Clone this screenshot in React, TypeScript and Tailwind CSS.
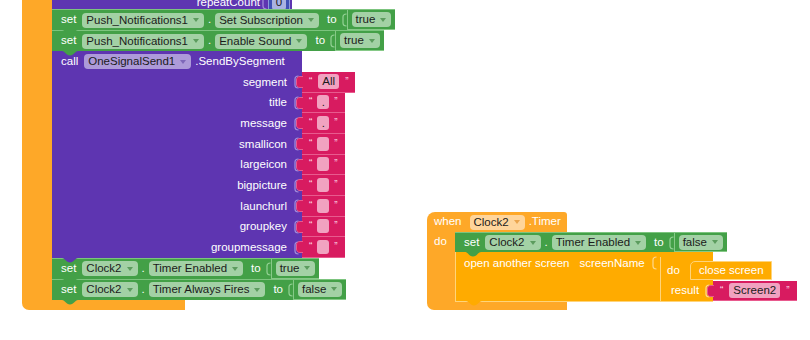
import React from "react";

type Tone = "green" | "purple" | "orange";

const FIELD_BG: Record<Tone, string> = {
  green: "bg-[#a3d1a5]",
  purple: "bg-[#ad9ad9]",
  orange: "bg-[#ffd59b]",
};

const CARET: Record<Tone, string> = {
  green: "fill-[#5c9c5e]",
  purple: "fill-[#7e68b9]",
  orange: "fill-[#eba54d]",
};

const Caret = ({ fill }: { fill: string }) => (
  <svg width="6" height="4" viewBox="0 0 6 4" className="ml-[5px] shrink-0">
    <path d="M0 0 L6 0 L3 4 Z" className={fill} />
  </svg>
);

const Field = ({ label, tone, className = "" }: { label: string; tone: Tone; className?: string }) => (
  <span
    className={`inline-flex h-[15px] shrink-0 items-center whitespace-nowrap rounded-[4px] pl-[4px] pr-[5px] leading-[15px] text-[#1b1b1b] ${FIELD_BG[tone]} ${className}`}
  >
    {label}
    <Caret fill={CARET[tone]} />
  </span>
);

// the "(" outline of an empty value socket
const Socket = ({ stroke, className = "" }: { stroke: string; className?: string }) => (
  <svg width="5" height="14" viewBox="0 0 5 14" className={`shrink-0 ${className}`}>
    <path d="M4.5 1 C2 1 1 2.5 1 4 L1 10 C1 11.5 2 13 4.5 13" fill="none" strokeWidth="1.2" className={stroke} />
  </svg>
);

// notch that hangs below a statement block
const Tab = ({ fill }: { fill: string }) => (
  <svg width="16" height="5" viewBox="0 0 16 5" className="absolute left-[10px] top-full z-10">
    <path d="M0 0 C3 0 4 4.5 8 4.5 C12 4.5 13 0 16 0 Z" className={fill} />
  </svg>
);

// puzzle knob on the left of a value block
const Knob = ({ fill, stroke }: { fill: string; stroke: string }) => (
  <svg width="7" height="12" viewBox="0 0 7 12" className="absolute -left-[6px] top-[4px]">
    <path d="M7 0.5 L4 0.5 C1.5 0.5 0.5 2 0.5 4 L0.5 8 C0.5 10 1.5 11.5 4 11.5 L7 11.5" strokeWidth="1" className={`${fill} ${stroke}`} />
  </svg>
);

const StringBlock = ({ text, className = "h-full" }: { text: string; className?: string }) => (
  <div className={`relative flex shrink-0 items-center border-b border-[#e85a8e] bg-[#d81b60] pl-[7px] pr-[7px] ${className}`}>
    <Knob fill="fill-[#d81b60]" stroke="stroke-[#e85a8e]" />
    <span className="text-[10px] leading-none text-[#fcd8e6]">“</span>
    {text.length <= 1 ? (
      <span className="mx-[5px] flex h-[14px] w-[12px] items-center justify-center rounded-[3px] bg-[#f1a2c0] leading-[14px] text-[#1b1b1b]">
        {text}
      </span>
    ) : (
      <span className="mx-[6px] flex h-[15px] items-center justify-center rounded-[3px] bg-[#f1a2c0] px-[4px] leading-[15px] text-[#1b1b1b]">
        {text}
      </span>
    )}
    <span className="text-[10px] leading-none text-[#fcd8e6]">”</span>
  </div>
);

const SetBlock = ({ comp, prop, value, h }: { comp: string; prop: string; value: string; h: string }) => (
  <div className={`relative flex ${h} w-fit items-center border-t border-[#7cc47e] bg-[#43a047] pl-[9px] text-white`}>
    <span>set</span>
    <Field tone="green" label={comp} className="ml-[6px]" />
    <span className="mx-[4px]">.</span>
    <Field tone="green" label={prop} />
    <span className="ml-[8px]">to</span>
    <Socket stroke="stroke-[#95d396]" className="ml-[5px]" />
    <div className="relative flex h-full items-center border-l border-b border-[#86c987] bg-[#43a047] px-[4px]">
      <Field tone="green" label={value} />
    </div>
    <Tab fill="fill-[#43a047]" />
  </div>
);

const params: [string, string][] = [
  ["segment", "All"],
  ["title", "."],
  ["message", "."],
  ["smallicon", ""],
  ["largeicon", ""],
  ["bigpicture", ""],
  ["launchurl", ""],
  ["groupkey", ""],
  ["groupmessage", ""],
];

const CallBlock = () => (
  <div className="relative flex flex-col text-white">
    <div className="flex h-[21px] w-[250px] items-center bg-[#5e35b1] pl-[9px]">
      <span>call</span>
      <Field tone="purple" label="OneSignalSend1" className="ml-[6px]" />
      <span className="ml-[4px]">.SendBySegment</span>
    </div>
    {params.map(([name, text]) => (
      <div key={name} className="flex h-[20.67px]">
        <div className="flex w-[250px] items-center justify-end bg-[#5e35b1] pr-[3px]">
          <span>{name}</span>
          <Socket stroke="stroke-[#a590dc]" className="ml-[7px]" />
        </div>
        <StringBlock text={text} />
      </div>
    ))}
    <Tab fill="fill-[#5e35b1]" />
  </div>
);

const LeftStack = () => (
  <div className="absolute left-[22px] top-0 flex flex-col">
    <div className="flex">
      <div className="w-[30px] shrink-0 bg-[#fea828]" />
      <div className="flex flex-col items-start">
        <div className="flex h-[9px] w-[240px] items-end justify-end overflow-hidden bg-[#5e35b1] pr-[2px] text-white">
          <div className="-mb-[4px] flex h-[20px] shrink-0 items-center">
            <span>repeatCount</span>
            <Socket stroke="stroke-[#a590dc]" className="ml-[2px]" />
            <div className="ml-[1px] flex h-[18px] w-[22px] items-center justify-center border border-[#8c98dc] bg-[#3f51b5]">
              <span className="flex h-[14px] w-[14px] items-center justify-center rounded-[3px] bg-[#aab2e2] text-[#1b1b1b]">0</span>
            </div>
          </div>
        </div>
        <SetBlock comp="Push_Notifications1" prop="Set Subscription" value="true" h="h-[21px]" />
        <SetBlock comp="Push_Notifications1" prop="Enable Sound" value="true" h="h-[21px]" />
        <CallBlock />
        <SetBlock comp="Clock2" prop="Timer Enabled" value="true" h="h-[21px]" />
        <SetBlock comp="Clock2" prop="Timer Always Fires" value="false" h="h-[21px]" />
      </div>
    </div>
    <div className="h-[10px] w-[163px] rounded-bl-[7px] bg-[#fea828]" />
  </div>
);

const OpenScreen = () => (
  <div className="relative flex h-[50px] w-fit border-b border-l border-[#ffd47a] bg-[#ffab00] text-white">
    <div className="flex w-[204px] items-start pl-[8px] pt-[4px] leading-[15px]">
      <span>open another screen</span>
      <span className="ml-[10px]">screenName</span>
      <Socket stroke="stroke-[#ffd98f]" className="ml-[7px]" />
    </div>
    <div className="flex w-[53px] flex-col">
      <div className="h-[6px]" />
      <div className="flex flex-1 flex-col border-l border-[#ffd47a]">
        <div className="flex h-[24px] items-end pb-[1px]">
          <span className="w-[29px] shrink-0 self-center pl-[6px] pt-[4px]">do</span>
          <div className="flex h-[19px] shrink-0 items-center rounded-tl-[5px] border border-[#ffd47a] bg-[#ffab00] pl-[8px] pr-[7px]">
            close screen
          </div>
        </div>
        <div className="flex h-[20px]">
          <div className="flex w-[52px] shrink-0 items-center pl-[10px]">
            <span>result</span>
            <Socket stroke="stroke-[#ffd98f]" className="ml-[6px]" />
          </div>
          <StringBlock text="Screen2" className="h-[20px]" />
        </div>
      </div>
    </div>
    <Tab fill="fill-[#ffab00]" />
  </div>
);

const RightStack = () => (
  <div className="absolute left-[427px] top-[212px] flex flex-col text-white">
    <div className="flex h-[20px] w-[140px] items-center rounded-tl-[8px] rounded-tr-[3px] bg-[#fea828] pl-[7px]">
      <span>when</span>
      <Field tone="orange" label="Clock2" className="ml-[8px]" />
      <span className="ml-[4px]">.Timer</span>
    </div>
    <div className="flex">
      <div className="w-[28px] shrink-0 bg-[#fea828] pl-[7px]">
        <div className="flex h-[20px] items-center">do</div>
      </div>
      <div className="flex flex-col items-start">
        <SetBlock comp="Clock2" prop="Timer Enabled" value="false" h="h-[20px]" />
        <OpenScreen />
      </div>
    </div>
    <div className="h-[8px] w-[140px] rounded-bl-[7px] bg-[#fea828]" />
  </div>
);

export default function App() {
  return (
    <div className="relative h-[340px] w-[810px] overflow-hidden bg-white whitespace-nowrap font-['Liberation_Sans',Arial,sans-serif] text-[11.5px] leading-none">
      <LeftStack />
      <RightStack />
    </div>
  );
}
